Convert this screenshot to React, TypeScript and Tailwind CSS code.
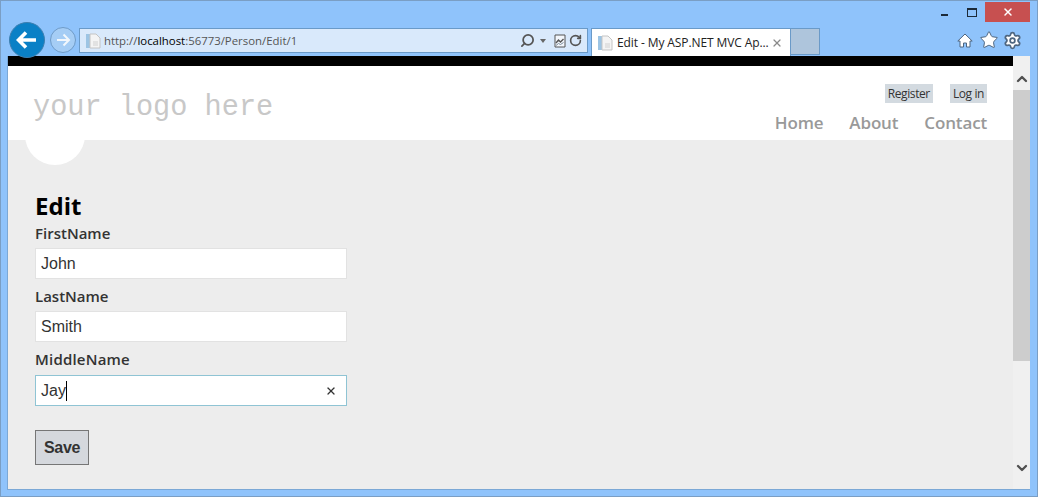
import { ChevronDown, ChevronUp, RotateCw, Search, Settings, Star, X } from "lucide-react";

const PageIcon = () => (
  <svg width="16" height="16" viewBox="0 0 16 16">
    <rect x="1" y="1" width="4" height="14" fill="#9cc4e4" />
    <path d="M5 1h6l4 4v10H5z" fill="#f4f4f4" stroke="#c4c4c4" />
    <path d="M8 8h5v5H8z" fill="#e2e2e2" />
  </svg>
);

const CompatIcon = () => (
  <svg width="12" height="14" viewBox="0 0 12 14">
    <path d="M1 1h10v12H1z" fill="#f2f6fb" stroke="#555" />
    <path d="M2 9l2.500-3 2 2 3-3" fill="none" stroke="#555" strokeWidth="1.400" />
    <path d="M2 11.500l2.500-2 2 1 3-2" fill="none" stroke="#7a8a9a" />
  </svg>
);

const Field = ({ label, value }: { label: string; value: string }) => (
  <div className="flex flex-col">
    <label className="h-[26px] text-[15px] font-semibold leading-[22px] text-[#333]">{label}</label>
    <input
      readOnly
      defaultValue={value}
      className="mb-[6px] h-[31px] w-[312px] border border-[#e2e2e2] bg-white px-[5px] text-[16px] text-[#333] outline-none [font-family:'Liberation_Sans',sans-serif]"
    />
  </div>
);

export default function App() {
  return (
    <div className="flex h-[497px] w-[1038px] flex-col overflow-hidden border border-[#7a9ec4] bg-[#8fc3fb] [font-family:'Open_Sans',sans-serif]">
      {/* caption buttons */}
      <div className="flex h-[27px] items-start justify-end pr-[7px] pt-px">
        <div className="mr-[19px] mt-[12px] h-[2px] w-[7px] bg-[#1c2a38]" />
        <div className="mr-[8px] mt-[6px] h-[9px] w-[10px] border border-t-2 border-[#1c2a38]" />
        <div className="flex h-[20px] w-[45px] items-center justify-center bg-[#c75050]">
          <X size={12} strokeWidth={3} className="text-white" />
        </div>
      </div>

      {/* toolbar */}
      <div className="relative flex h-[28px] items-start pl-[78px] pr-[15px]">
        <div className="absolute left-[8px] top-[-6px] flex h-[36px] w-[36px] items-center justify-center rounded-full border border-[#3d7fb0] bg-[#0a80c6]">
          <svg width="22" height="20" viewBox="0 0 22 20">
            <path d="M10 2.500L2.500 10l7.500 7.500M3 10h17" fill="none" stroke="#fff" strokeWidth="3.600" />
          </svg>
        </div>
        <div className="absolute left-[49px] top-[-1px] flex h-[26px] w-[26px] items-center justify-center rounded-full border border-[#6f9bc8] bg-[#a5cdf5]">
          <svg width="16" height="14" viewBox="0 0 16 14">
            <path d="M8.500 1.500L14 7l-5.500 5.500M2 7h11" fill="none" stroke="#f2f7fc" strokeWidth="2" />
          </svg>
        </div>

        <div className="flex h-[25px] w-[509px] items-center border border-[#6a9ac8] bg-[#d9e9fb] pl-[5px] pr-[5px]">
          <PageIcon />
          <span className="ml-[3px] text-[11.400px] leading-none text-[#555]">
            http://<span className="text-black">localhost</span>:56773/Person/Edit/1
          </span>
          <div className="ml-auto flex items-center gap-[3px]">
            <Search size={15} strokeWidth={2.800} className="-scale-x-100 text-[#555]" />
            <div className="ml-[2px] mr-[5px] h-0 w-0 border-x-[3.500px] border-t-[4px] border-x-transparent border-t-[#666]" />
            <CompatIcon />
            <RotateCw size={13} strokeWidth={3} className="text-[#555]" />
          </div>
        </div>

        <div className="ml-[3px] flex h-[28px] w-[200px] items-center border border-b-0 border-[#6a9ac8] bg-white pl-[5px] pr-[7px]">
          <PageIcon />
          <span className="ml-[4px] whitespace-nowrap text-[12px] tracking-[-0.1px] text-[#222]">
            Edit - My ASP.NET MVC Ap...
          </span>
          <X size={12} strokeWidth={2.500} className="ml-auto text-[#8a8a8a]" />
        </div>
        <div className="h-[27px] w-[29px] border border-l-0 border-[#6a9ac8] bg-[#aec5dc]" />

        <div className="ml-auto flex h-[24px] items-center text-[#4e6680]">
          <svg width="16" height="15" viewBox="0 0 16 15" className="mr-[6px]">
            <path d="M8 1L.8 8H3v6h3.500v-4h3v4H13V8h2.200z" fill="#fff" stroke="#4e6680" />
          </svg>
          <Star size={20} strokeWidth={1.200} fill="#fff" className="mr-[4px]" />
          <Settings size={19} strokeWidth={2.200} fill="#fff" />
        </div>
      </div>

      {/* browser content */}
      <div className="mb-[6px] ml-[6px] mr-[7px] flex min-h-0 flex-1 border-b border-l border-[#7ba8d6]">
        <div className="flex min-w-0 flex-1 flex-col bg-[#ededed]">
          <div className="h-[10px] bg-black" />
          <header className="relative flex h-[74px] justify-between bg-white pl-[25px] pr-[26px]">
            <div className="absolute left-[17px] top-[39px] h-[60px] w-[60px] rounded-full bg-white" />
            <div className="relative mt-[23px] text-[28.600px] leading-[38px] text-[#c8c8c8] [font-family:'Liberation_Mono',monospace]">
              your logo here
            </div>
            <div className="relative flex flex-col items-end pt-[18px]">
              <div className="flex gap-[17px] text-[12px] text-[#333]">
                <span className="flex h-[19px] items-center bg-[#d3dae0] px-[3px] tracking-[-0.4px]">Register</span>
                <span className="flex h-[19px] items-center bg-[#d3dae0] px-[3px] tracking-[-0.4px]">Log in</span>
              </div>
              <nav className="mt-[7px] flex gap-[26px] text-[17px] font-semibold leading-[26px] tracking-[-0.15px] text-[#999]">
                <span>Home</span>
                <span>About</span>
                <span>Contact</span>
              </nav>
            </div>
          </header>

          <main className="flex flex-col pl-[27px] pt-[50px]">
            <h1 className="h-[32px] text-[24px] font-bold leading-[32px] text-black">Edit</h1>
            <Field label="FirstName" value="John" />
            <Field label="LastName" value="Smith" />
            <label className="h-[27px] text-[15px] font-semibold leading-[22px] tracking-[0.2px] text-[#333]">MiddleName</label>
            <div className="flex h-[31px] w-[312px] items-center border border-[#8fc4d4] bg-white pl-[5px] pr-[9px] text-[16px] text-[#333] [font-family:'Liberation_Sans',sans-serif]">
              Jay
              <span className="h-[20px] w-px bg-black" />
              <X size={12} strokeWidth={2.500} className="ml-auto text-[#333]" />
            </div>
            <button className="mt-[24px] h-[35px] w-[54px] border border-[#767676] bg-[#d5d8dd] text-[16px] font-bold tracking-[-0.3px] text-[#333] [font-family:'Liberation_Sans',sans-serif]">
              Save
            </button>
          </main>
        </div>

        {/* scrollbar */}
        <div className="flex w-[17px] flex-col items-center bg-[#f0f0f0]">
          <div className="flex h-[34px] items-end pb-[3px]">
            <ChevronUp size={16} strokeWidth={3.500} className="text-[#505050]" />
          </div>
          <div className="h-[271px] w-full bg-[#cdcdcd]" />
          <div className="mt-auto pb-[13px]">
            <ChevronDown size={16} strokeWidth={3.500} className="text-[#505050]" />
          </div>
        </div>
      </div>
    </div>
  );
}
